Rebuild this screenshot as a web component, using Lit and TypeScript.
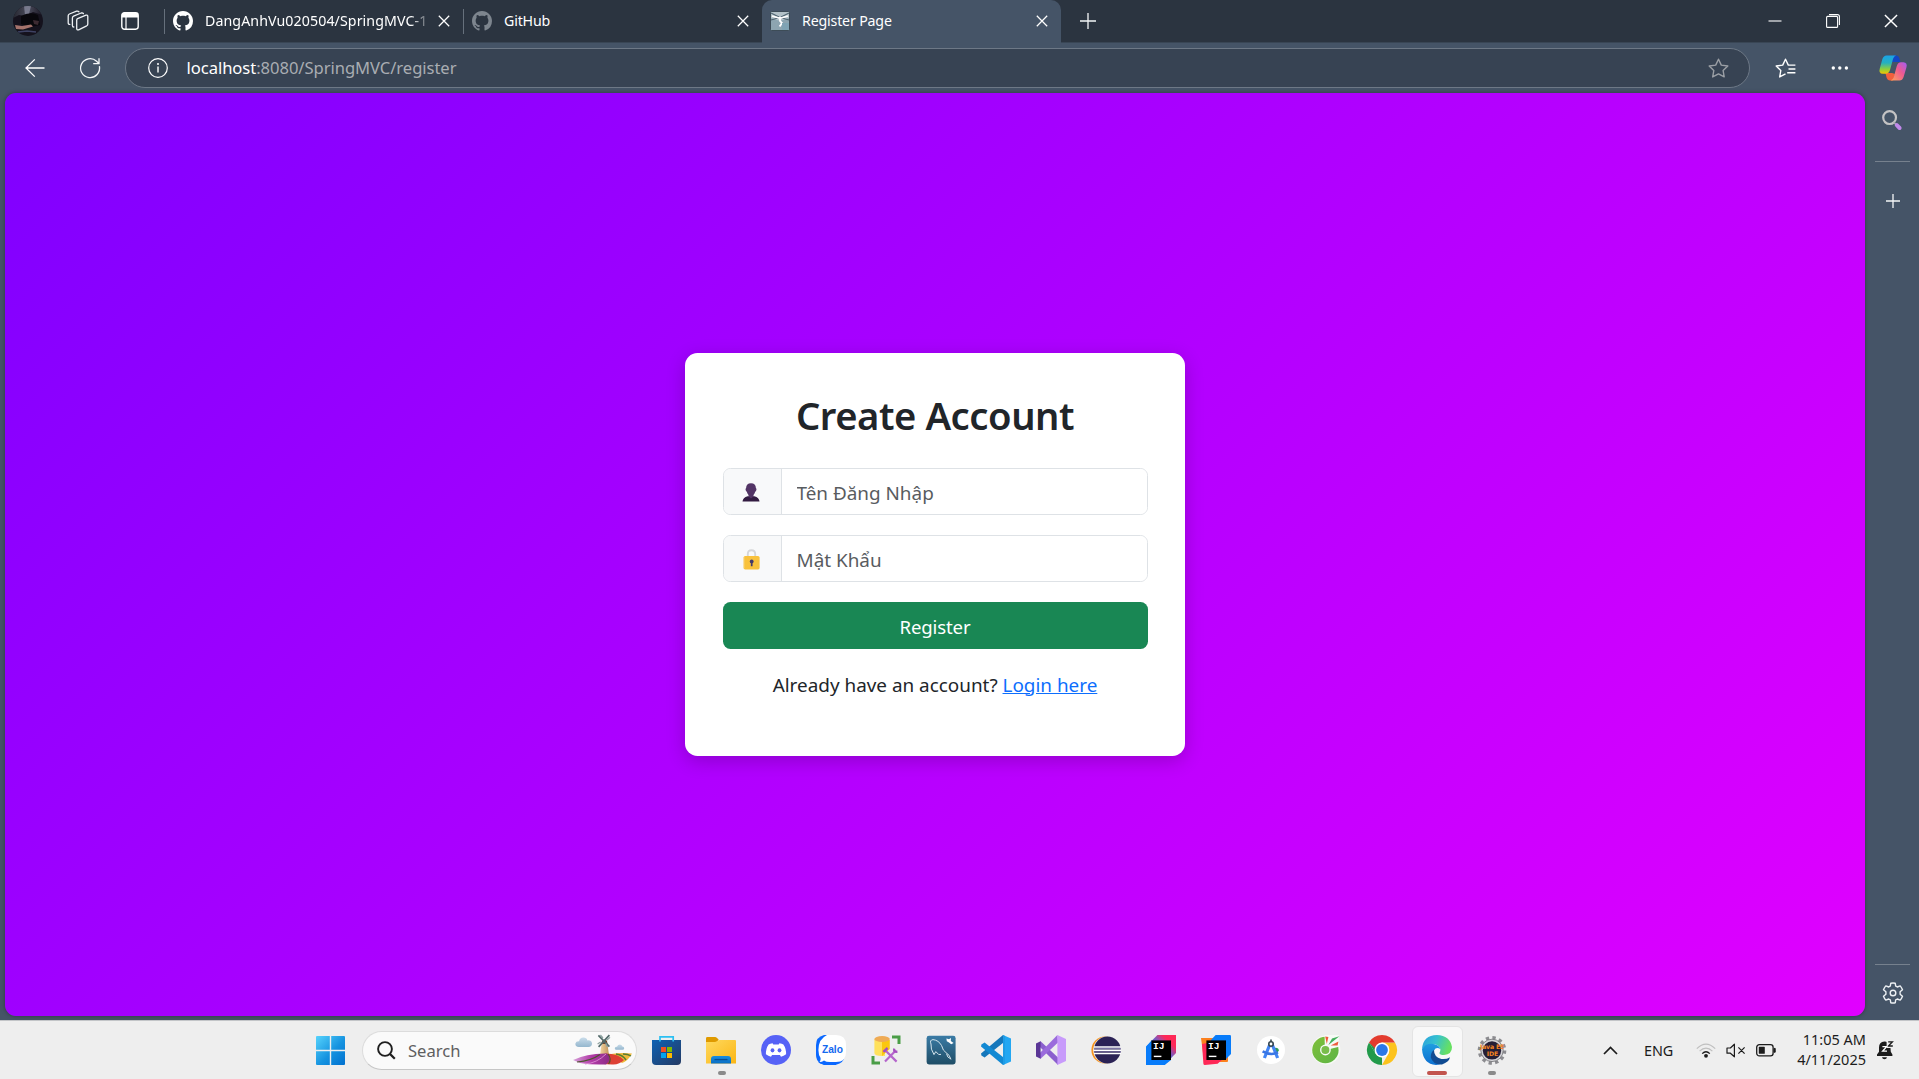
import { LitElement, html, svg, css } from "lit";
import { customElement, state } from "lit/decorators.js";

const icon = (w: number, h: number, body: unknown, vb = `0 0 ${w} ${h}`) =>
  html`<svg class="ic" width=${w} height=${h} viewBox=${vb} fill="none">${body}</svg>`;

const GITHUB =
  "M8 0C3.58 0 0 3.58 0 8c0 3.54 2.29 6.53 5.47 7.59.4.07.55-.17.55-.38 0-.19-.01-.82-.01-1.49-2.01.37-2.53-.49-2.69-.94-.09-.23-.48-.94-.82-1.13-.28-.15-.68-.52-.01-.53.63-.01 1.08.58 1.23.82.72 1.21 1.87.87 2.33.66.07-.52.28-.87.51-1.07-1.78-.2-3.64-.89-3.64-3.95 0-.87.31-1.59.82-2.15-.08-.2-.36-1.02.08-2.12 0 0 .67-.21 2.2.82.64-.18 1.32-.27 2-.27s1.36.09 2 .27c1.53-1.04 2.2-.82 2.2-.82.44 1.1.16 1.92.08 2.12.51.56.82 1.27.82 2.15 0 3.07-1.87 3.75-3.65 3.95.29.25.54.73.54 1.48 0 1.07-.01 1.93-.01 2.2 0 .21.15.46.55.38A8.01 8.01 0 0 0 16 8c0-4.42-3.58-8-8-8z";

const github = (color: string) => icon(20, 20, svg`<path fill=${color} d=${GITHUB}/>`, "0 0 16 16");

const cross = (s: number, color = "#fff") =>
  icon(s, s, svg`<path d="M.8 .8 L11.2 11.2 M11.2 .8 L.8 11.2" stroke=${color} stroke-width="1.25"/>`, "0 0 12 12");

const plus = (s: number) =>
  icon(s, s, svg`<path d=${`M${s / 2} 1 V${s - 1} M1 ${s / 2} H${s - 1}`} stroke="#f4f6f8" stroke-width="1.3"/>`);

const avatar = icon(
  30,
  30,
  svg`<defs>
      <clipPath id="av"><circle cx="15" cy="15" r="15"/></clipPath>
      <linearGradient id="avg" x1="0" x2="1"><stop stop-color="#25262f"/><stop offset=".5" stop-color="#4b4c5c"/><stop offset="1" stop-color="#181522"/></linearGradient>
    </defs>
    <g clip-path="url(#av)">
      <rect width="30" height="30" fill="#15121d"/>
      <path d="M0 0H30V9L20 6 12 10 6 9 0 12Z" fill="url(#avg)"/>
      <path d="M11 0H18L16 8 12 9Z" fill="#77798c"/>
      <path d="M8 10Q17 5 25 9L27 19 17 21 8 18Z" fill="#08070c"/>
      <path d="M2 19L9 20 18 18.5 20 20.5 10 23.5 3 23Z" fill="#a5736c"/>
      <path d="M20 14L26 15 25 19 21 18Z" fill="#3c2a31"/>
      <path d="M5 26L14 25 23 26" stroke="#3e4263" stroke-width="1.5"/>
    </g>`
);

const workspaces = icon(
  22,
  22,
  svg`<g stroke="#eef1f4" stroke-width="1.3" stroke-linejoin="round" stroke-linecap="round">
      <path d="M10.6 8.6 L19 5.2 Q20.8 4.7 20.8 6.4 V14 Q20.8 15.2 19.7 15.8 L11.6 19.8 Q9.7 20.4 9.7 18.6 V10.2 Q9.7 9 10.6 8.6Z"/>
      <path d="M6.8 17 Q5.4 17 5.4 15.4 V8 Q5.4 6.8 6.6 6.2 L14.2 3 Q15.8 2.6 16.4 3.6"/>
      <path d="M2.8 14.4 Q1.2 14.4 1.2 12.8 V5.8 Q1.2 4.6 2.4 4 L9.6 1.2 Q11.2 .8 12 1.8"/>
    </g>`
);

const tabActions = icon(
  18,
  18,
  svg`<rect x=".8" y=".8" width="16.4" height="16.4" rx="2.6" stroke="#fff" stroke-width="1.4"/>
    <path d="M.8 3.4 Q.8 .8 3.4 .8 H14.6 Q17.2 .8 17.2 3.4 V5.4 H.8Z" fill="#fff"/>
    <path d="M5 5V17" stroke="#fff" stroke-width="1.2"/>`
);

const favicon = icon(
  20,
  20,
  svg`<rect x=".5" y=".5" width="19" height="19" rx="1" fill="#8da5b0" stroke="#3d4c57"/>
    <path d="M1 1H19V7L10 10 1 7Z" fill="#b3c2c8"/>
    <path d="M1 2L9 6 M19 2L11 6 M1 9L8 7 M19 9L12 7" stroke="#4e6370" stroke-width="1.1"/>
    <path d="M2 5L9 7 M18 5L11 7 M10 6V10L12 12 9.6 15.6" stroke="#fff" stroke-width="1.8"/>
    <path d="M12 12H19V19H12Z" fill="#7fa3b3"/>`
);

const back = icon(20, 20, svg`<path d="M19.5 10H1 M9.8 1.4L1 10l8.8 8.6" stroke="#fff" stroke-width="1.3"/>`);
const reload = icon(
  22,
  22,
  svg`<path d="M20.4 9.2 A9.5 9.5 0 1 1 17.6 4.2 L19.8 6.4 M20 1.2V6.6H14.2" stroke="#f4f6f8" stroke-width="1.3"/>`
);
const info = icon(
  20,
  20,
  svg`<circle cx="10" cy="10" r="9.3" stroke="#fff" stroke-width="1.2"/><path d="M10 8.6V14.4" stroke="#fff" stroke-width="1.4"/><circle cx="10" cy="6" r="1" fill="#fff"/>`
);
const STAR = "M10.5 1.2L13.3 7.1 19.8 8 15.1 12.5 16.2 18.9 10.5 15.9 4.7 18.9 5.8 12.5 1.2 8 7.7 7.1Z";
const star = icon(21, 20, svg`<path d=${STAR} stroke="#9b9fa5" stroke-width="1.4" stroke-linejoin="round"/>`);
const favorites = icon(
  21,
  20,
  svg`<path d="M10.5 15.9L4.7 18.9 5.8 12.5 1.2 8 7.7 7.1 10.5 1.2 13.3 7.1H20.4 M13.5 11H20.4 M12.2 14.7H20.4" stroke="#fff" stroke-width="1.4" stroke-linejoin="round"/>`
);
const dots = icon(
  18,
  4,
  svg`<g fill="#fff"><circle cx="2.3" cy="2" r="1.7"/><circle cx="8.8" cy="2" r="1.7"/><circle cx="15.4" cy="2" r="1.7"/></g>`
);

const copilot = icon(
  28,
  26,
  svg`<defs>
      <linearGradient id="cp1" x1="0" y1="0" x2="0" y2="1"><stop stop-color="#1aa3e8"/><stop offset=".4" stop-color="#25b0c0"/><stop offset=".75" stop-color="#8fd03a"/><stop offset="1" stop-color="#f4c400"/></linearGradient>
      <linearGradient id="cp2" x1="1" y1="0" x2="0" y2="1"><stop stop-color="#a35cf5"/><stop offset=".45" stop-color="#ee5a90"/><stop offset="1" stop-color="#ffa45a"/></linearGradient>
    </defs>
    <path d="M14 .5H17Q19.6.5 20.4 3.4L21.4 7H18L12 7Z" fill="#1346c4"/>
    <path d="M14 25.5H11Q8.4 25.5 7.6 22.6L6.4 18H13L16 19Z" fill="#f2603c"/>
    <path d="M7.5.5H17Q14.8 1 14 4L11 15Q10 18.6 6.6 18.8H3.8Q-.6 18.4 .8 13.4L3.4 4Q4.6.5 7.5.5Z" fill="url(#cp1)"/>
    <path d="M20.5 25.5H11.6Q14 25 14.8 22L17.8 11Q18.8 7.4 22 7.2H24.4Q28.8 7.6 27.4 12.6L24.6 22Q23.4 25.5 20.5 25.5Z" fill="url(#cp2)"/>`
);

const sideSearch = icon(
  20,
  20,
  svg`<circle cx="7.6" cy="7.6" r="6.4" stroke="#c4c3c4" stroke-width="2.2"/>
    <path d="M11.8 12.2L14 14.6" stroke="#a9a7ad" stroke-width="1.6"/>
    <path d="M14.8 15.2L17.6 18" stroke="#c188ea" stroke-width="4" stroke-linecap="round"/>`
);

const gear = icon(
  22,
  22,
  svg`<path d="M8.8 1.2 Q11 .7 13.2 1.2 L13.7 4.2 Q14.4 4.5 15.2 5 L18.2 3.9 Q19.7 5.6 20.5 7.7 L18.1 9.7 V12.3 L20.5 14.3 Q19.7 16.4 18.2 18.1 L15.2 17 Q14.4 17.5 13.7 17.8 L13.2 20.8 Q11 21.3 8.8 20.8 L8.3 17.8 Q7.6 17.5 6.8 17 L3.8 18.1 Q2.3 16.4 1.5 14.3 L3.9 12.3 V9.7 L1.5 7.7 Q2.3 5.6 3.8 3.9 L6.8 5 Q7.6 4.5 8.3 4.2Z" stroke="#eef1f4" stroke-width="1.4" stroke-linejoin="round"/>
    <circle cx="11" cy="11" r="2.8" stroke="#eef1f4" stroke-width="1.4"/>`
);

const person = icon(
  18,
  19,
  svg`<path d="M.5 18.5Q.8 14.6 5.6 13.2H12.4Q17.2 14.6 17.5 18.5Z" fill="#321b41"/>
    <path d="M9 .3Q13.8.3 13.9 5Q15 5.8 14.2 7.6Q13.9 8.6 13.2 8.7Q12.7 10.8 11.5 12V13.6L9 15.4 6.5 13.6V12Q5.3 10.8 4.8 8.7Q4.1 8.6 3.8 7.6Q3 5.8 4.1 5Q4.2.3 9 .3Z" fill="#533566"/>`
);
const lock = icon(
  17,
  21,
  svg`<path d="M4.8 8V5.2Q4.8 1.2 8.5 1.2T12.2 5.2V8" stroke="#d5d6d8" stroke-width="1.9"/>
    <rect x=".6" y="7" width="16" height="13.4" rx="1.6" fill="#f9c23c"/>
    <path d="M.9 8V19.4" stroke="#f7dc98" stroke-width=".8"/>
    <circle cx="8.7" cy="12.4" r="1.9" fill="#433b6b"/><path d="M8.7 12.4V17.2" stroke="#433b6b" stroke-width="1.7"/>`
);

const windows = icon(
  29,
  29,
  svg`<defs><linearGradient id="win" x1="0" y1="0" x2="29" y2="29" gradientUnits="userSpaceOnUse"><stop stop-color="#57d3fc"/><stop offset=".55" stop-color="#1593e0"/><stop offset="1" stop-color="#0070cf"/></linearGradient></defs>
    <path d="M1 0H13.8V13.8H0V1Q0 0 1 0Z M15.2 0H28Q29 0 29 1V13.8H15.2Z M0 15.2H13.8V29H1Q0 29 0 28Z M15.2 15.2H29V28Q29 29 28 29H15.2Z" fill="url(#win)"/>`
);
const magnifier = icon(
  19,
  19,
  svg`<circle cx="8" cy="8" r="6.9" stroke="#1f1f1f" stroke-width="1.9"/><path d="M12.9 12.9L17.8 17.8" stroke="#1f1f1f" stroke-width="2.2"/>`
);

const windmill = icon(
  60,
  32,
  svg`<defs>
      <linearGradient id="cl" x1="0" y1="0" x2="0" y2="1"><stop stop-color="#c9dcea"/><stop offset="1" stop-color="#95b7ce"/></linearGradient>
      <linearGradient id="mill" x1="0" x2="1"><stop stop-color="#f3d6a2"/><stop offset="1" stop-color="#c3935a"/></linearGradient>
      <linearGradient id="f1" x1="0" x2="1"><stop stop-color="#d7a3da"/><stop offset=".5" stop-color="#b23ba8"/><stop offset="1" stop-color="#8c2b86"/></linearGradient>
    </defs>
    <path d="M6 13Q2 13 2.4 9.6 3 7 6 7.2 7 3.4 10.6 3.6 13.6 3.6 14.4 6.4 18.6 6 19 9.6 19 13 15.4 13Z" fill="url(#cl)"/>
    <path d="M43 15.8Q41.6 15.6 41.8 14 42.4 12.6 44 12.8 44.8 10.4 47 10.4 49 10.6 49.4 12.6 51.4 12.8 51.2 14.4 51 15.8 49.6 15.8Z" fill="url(#cl)"/>
    <path d="M29 7Q31.5 4 34 7L36 21H27Z" fill="url(#mill)"/>
    <path d="M29 7Q31.5 4.6 34 7L34.4 10H28.6Z" fill="#75452f"/>
    <path d="M38 20Q48 18.5 59 19.5 55 27 49 29Z" fill="#f0b93a"/>
    <path d="M43 20Q50 21 53 26 M50 20Q55 20 58 22" stroke="#5a7d2f" stroke-width="1.5"/>
    <path d="M32 19.4Q46 19.6 51 26 46 31 39 30.4L30 30Z" fill="#dd4135"/>
    <path d="M0 26Q14 19 34 19.4 40 25 33 30.4 18 31 7 29Z" fill="url(#f1)"/>
    <path d="M4 28Q18 27 27 20.6 M35 20Q39 25 35.6 30" stroke="#4e5530" stroke-width="1.2"/>
    <path d="M12 30Q24 29 33 20" stroke="#d884d0" stroke-width="1"/>
    <path d="M25.4 1.4L36.4 12.6 M36.4 1.2L25.6 12.8" stroke="#536a6a" stroke-width="1.7"/>
    <path d="M27.4 1L30 4 M37 3.4L34 6 M24.6 10L27.6 8 M34.4 13L32.8 9.6" stroke="#8fa3a0" stroke-width="1.2"/>`
);

const store = svg`<defs><linearGradient id="st" x1="0" y1="0" x2="1" y2="1"><stop stop-color="#0f62b4"/><stop offset="1" stop-color="#243a63"/></linearGradient></defs>
  <path d="M1 5H30V26Q30 30 26 30H5Q1 30 1 26Z" fill="url(#st)"/>
  <path d="M9 6.5V1.8H22.2V6.5" stroke="#2cc0f2" stroke-width="1.7"/>
  <path d="M10 12H15V17H10Z" fill="#f25022"/><path d="M16 12H21V17H16Z" fill="#7fba00"/>
  <path d="M10 18H15V23H10Z" fill="#00a4ef"/><path d="M16 18H21V23H16Z" fill="#ffb900"/>`;

const explorer = svg`<defs><linearGradient id="ex" x1="0" y1="0" x2="1" y2="1"><stop stop-color="#ffd95e"/><stop offset="1" stop-color="#fbb615"/></linearGradient><linearGradient id="ex2" x1="0" y1="0" x2="0" y2="1"><stop stop-color="#1a8de0"/><stop offset="1" stop-color="#0a6fc4"/></linearGradient></defs>
  <path d="M0 3.4Q0 2 1.4 2H9.4Q10.6 2 12.6 4.6L11 8H0Z" fill="#df9a00"/>
  <path d="M0 7H8.6Q10 7 11.4 5.8 12.4 5 14 5H29Q30 5 30 6V28.4H0Z" fill="url(#ex)"/>
  <path d="M5 28.4V24Q5 21 8 21H22Q25 21 25 24V28.4Z" fill="url(#ex2)"/>
  <path d="M8.5 24.6H21.5" stroke="#0a4f94" stroke-width="1.3"/>`;

const discord = svg`<circle cx="15" cy="15" r="15" fill="#5662f6"/>
  <path d="M11.6 8.2Q9 8.6 7.6 9.4 4.8 13.4 4.9 19.3 7.3 21.2 10 21.8L11.1 19.9H18.9L20 21.8Q22.7 21.2 25.1 19.3 25.2 13.4 22.4 9.4 21 8.6 18.4 8.2L17.7 9.6Q15 9.2 12.3 9.6Z" fill="#fff"/>
  <ellipse cx="11.5" cy="15.3" rx="1.9" ry="2.1" fill="#5662f6"/><ellipse cx="18.5" cy="15.3" rx="1.9" ry="2.1" fill="#5662f6"/>`;

const zalo = svg`<path d="M8 0H20V30H14Q8 30 4 28.4 0 25 0 20V10Q0 2 8 0Z" fill="#0a68ff"/>
  <path d="M2 27L10 25 28 24Q25 30 16 30H8Z" fill="#0a68ff"/>
  <path d="M11 0H20Q30 0 30 10V17Q30 27 20 27H14Q10 27 8 25.4 6 27 3.6 27 5 25 4.6 23 2.4 20 2.4 15 2.4 4 11 0Z" fill="#fff"/>
  <text x="16.4" y="17.6" text-anchor="middle" class="zalo">Zalo</text>`;

const ssms = svg`<path d="M21 2H28V9 M9 28H2V21" stroke="#4a9d47" stroke-width="3"/>
  <path d="M3.4 4V18Q3.4 21 11 21H14V4Z" fill="#ffe15c"/><path d="M11 5H18.8V14L11 21Z" fill="#fbc70f"/>
  <ellipse cx="11.1" cy="4" rx="7.7" ry="3" fill="#efab55"/>
  <path d="M14 15L25.6 26.6 M24.8 15.4L14 26.6" stroke="#b565cc" stroke-width="2.2"/>
  <path d="M12.4 16.8L16.6 13 M23.4 13.6Q22 17 26.4 16.8" stroke="#a54fc0" stroke-width="2.4"/>`;

const mysql = svg`<defs><linearGradient id="my" x1="0" y1="0" x2="0" y2="1"><stop stop-color="#3a7ba5"/><stop offset="1" stop-color="#1f4d66"/></linearGradient></defs>
  <rect x=".6" y=".8" width="29" height="28.6" rx="2.4" fill="url(#my)"/>
  <path d="M8 19.6Q4.4 14 5 9 3.4 5 7 4.6 12.6 5.2 15.6 10.6 17 16 20 17.6 23.6 19.6 25 24.4 M8 19.6L9.8 16.6Q13 21 15 19.4 M20.6 18.8Q21 22.6 24.6 23.8" stroke="#d5e4ec" stroke-width="1"/>
  <path d="M20.4 3.4L23 4.2 25 3 24.8 6 27.6 8 25.2 9.2 23 7.4 20.8 6.2Z" fill="#fff"/>`;

const vscode = svg`<path d="M22 0L30 3.4V26.6L22 30Z" fill="#23a7f2"/>
  <path d="M22 0L22.6 7.6 3.6 22.4 .4 20.4 0 18.6Z" fill="#1577bb"/>
  <path d="M22 30L22.6 22.4 3.6 7.6 .4 9.6 0 11.4Z" fill="#1289d3"/>
  <path d="M22 0L24 1V29L22 30Z" fill="#1f9ce6"/>`;

const vs = svg`<path d="M4.6 6.2L22 22.4V30L1.4 9.4Z" fill="#8b5fce"/>
  <path d="M21.4 0L22 7.6 4.6 23.8 1.4 20.6Z" fill="#9a6bdc"/>
  <path d="M0 8.4L4.6 6.2V23.8L0 21.6Z" fill="#5a3595"/>
  <path d="M21.4 0L30 4V26L21.4 30Z" fill="#c89bfb"/>`;

const eclipse = svg`<circle cx="14" cy="15" r="13.6" fill="#f7941e"/><circle cx="15.8" cy="15" r="13.6" fill="#ededed"/><circle cx="16.4" cy="15" r="13.4" fill="#2b2255"/>
  <path d="M3 11.9H30 M2.6 15.2H30.2 M3 18.4H30" stroke="#fff" stroke-width="1.5"/>
  <path d="M3 13.5H30 M3 16.8H30" stroke="#8f86b8" stroke-width=".8"/>`;

const ijBadge = svg`<path d="M5.4 5.4H25V25H5.4Z" fill="#000"/>
  <text x="7" y="14.4" class="ij">IJ</text>
  <path d="M7.8 21.4H15.4" stroke="#fff" stroke-width="1.4"/>`;

const ijUltimate = svg`<defs><linearGradient id="ij" x1="0" y1="1" x2="1" y2="0"><stop offset=".35" stop-color="#087cfa"/><stop offset=".62" stop-color="#8a55b5"/><stop offset=".78" stop-color="#fe2857"/></linearGradient></defs>
  <path d="M11.4 0H30V18L18.6 30H0V11.4Z" fill="url(#ij)"/><path d="M0 12L6 5V25H25L18.6 30H0Z" fill="#087cfa"/>${ijBadge}`;

const ijCommunity = svg`<path d="M0 3H12L14 27 2 18Z" fill="#fc801d"/><path d="M16 22H27V26Q27 27 26 27H17Z" fill="#fc801d"/>
  <path d="M14.6 0H28.8Q30 0 30 1.2V19L24 25H9L10 5Z" fill="#087cfa"/>
  <path d="M1 9L6 8V24H22L16.6 28.8 3.8 30Q2.6 30 2.4 28.8Z" fill="#fe2857"/>${ijBadge}`;

const androidStudio = svg`<circle cx="15" cy="15" r="14" fill="#fff"/>
  <path d="M18 13Q22.6 12 22.8 15.6 22 18 19.6 17.4Z" fill="#2f9b5c"/>
  <path d="M14.4 8L8.4 23 M15.6 8L21.6 23" stroke="#4285f4" stroke-width="3.2"/>
  <path d="M6.6 16.4Q15 21 22 17.4" stroke="#3a76e4" stroke-width="2.6"/>
  <circle cx="15" cy="9" r="2.2" fill="#fff" stroke="#37474f" stroke-width="1.6"/><path d="M15 4.6V7" stroke="#37474f" stroke-width="1.6"/>`;

const cocCoc = svg`<defs><linearGradient id="cc" x1="0" y1="0" x2="1" y2="1"><stop stop-color="#7fbf3a"/><stop offset="1" stop-color="#5db545"/></linearGradient></defs>
  <circle cx="15" cy="15" r="14.4" fill="#f6faf4"/>
  <circle cx="14.4" cy="15" r="13.2" fill="url(#cc)"/>
  <path d="M13.6 0H28V11.8L17 14.6 13.8 12Z" fill="#f7faf6"/>
  <circle cx="14.4" cy="15" r="5.4" fill="#f7faf6"/>
  <circle cx="14.4" cy="15" r="4" fill="#79bd4b"/>
  <path d="M14.2 1.4L17.4 2 15.8 9Z" fill="#ef5b3c"/><path d="M21 3.4L28.4 1.2 17.4 10Z" fill="#43b05c"/><path d="M19.6 10.6L27.4 6.6 26.6 10.6Z" fill="#ef5b3c"/>`;

const chrome = svg`<path d="M2 7.5L8.8 19 15 22.5 15 30A15 15 0 0 1 2 7.5Z" fill="#229a4a"/>
  <path d="M28 7.5A15 15 0 0 1 15 30L21.4 18.8 21.5 11 15 7.5Z" fill="#fcc31d"/><path d="M2 7.5A15 15 0 0 1 28 7.5H15L9 11.6 8.6 15Z" fill="#e33b2e"/><path d="M2 7.5L8.6 18.8 7.6 13Z" fill="#229a4a"/>
  <circle cx="15" cy="15" r="7.4" fill="#fff"/><circle cx="15" cy="15" r="5.9" fill="#2b78e8"/>`;

const edge = svg`<defs>
    <linearGradient id="e1" x1="0" y1="0" x2="1" y2=".3"><stop stop-color="#2a9fe0"/><stop offset=".5" stop-color="#36c1cf"/><stop offset="1" stop-color="#66e062"/></linearGradient>
    <linearGradient id="e2" x1="0" y1="0" x2="0" y2="1"><stop stop-color="#1f9de0"/><stop offset="1" stop-color="#0d6fd0"/></linearGradient>
  </defs>
  <path d="M0 14Q1.2 0 15 0 28 .6 30 12 30 19.6 22 20 17.6 20 17.4 18 18.6 16.8 18.4 14 16.6 9 10 9 3 9.6 0 14Z" fill="url(#e1)"/>
  <path d="M0 14Q2.6 8.8 9.4 8.8 16.6 9 18.4 14 14 11.6 12 15.4 10 24 20 28 17.6 30 14 30 1 29 0 14Z" fill="url(#e2)"/>
  <path d="M12 15Q11.8 22 19.4 24 24.6 24.6 28 22.2 27 27 20 29.4 11 30 8.8 22.6 8.6 17 12 15Z" fill="#114c93"/>`;

const javaEe = svg`<circle cx="15" cy="15.4" r="12.6" stroke="#8c8c90" stroke-width="3.4" stroke-dasharray="3.3 3.3"/>
  <circle cx="15" cy="15.4" r="11.2" fill="#d3d3d6" stroke="#707074" stroke-width=".8"/><circle cx="15" cy="15.4" r="9.2" fill="#251e35"/>
  <text x="15" y="14.4" text-anchor="middle" class="jee">Java EE</text><text x="15.4" y="20.6" text-anchor="middle" class="jee">IDE</text>`;

const apps: { name: string; art: unknown; mark?: string }[] = [
  { name: "Microsoft Store", art: store },
  { name: "File Explorer", art: explorer, mark: "run" },
  { name: "Discord", art: discord },
  { name: "Zalo", art: zalo },
  { name: "SQL Server", art: ssms },
  { name: "MySQL Workbench", art: mysql },
  { name: "VS Code", art: vscode },
  { name: "Visual Studio", art: vs },
  { name: "Eclipse", art: eclipse },
  { name: "IntelliJ IDEA", art: ijUltimate },
  { name: "IntelliJ IDEA Community", art: ijCommunity },
  { name: "Android Studio", art: androidStudio },
  { name: "Coc Coc", art: cocCoc },
  { name: "Chrome", art: chrome },
  { name: "Edge", art: edge, mark: "active" },
  { name: "Java EE IDE", art: javaEe, mark: "run" },
];

const chevron = icon(15, 9, svg`<path d="M1 8L7.5 1.5 14 8" stroke="#1c1c1c" stroke-width="1.7"/>`);
const wifi = icon(
  20,
  15,
  svg`<path d="M.8 5.6Q10-3.4 19.2 5.6 M3.6 8.2Q10 1.8 16.4 8.2" stroke="#bfbfbf" stroke-width="1.2"/>
    <path d="M6.2 10.6Q10 6.8 13.8 10.6" stroke="#1c1c1c" stroke-width="1.3"/><circle cx="10" cy="12.8" r="1.9" fill="#1c1c1c"/>`
);
const mute = icon(
  20,
  15,
  svg`<path d="M1 5H4.4L8.4 1.2V13.8L4.4 10.2H1Z M12.4 4.4L18.6 10.6 M18.6 4.4L12.4 10.6" stroke="#1c1c1c" stroke-width="1.2" stroke-linejoin="round"/>`
);
const battery = icon(
  20,
  13,
  svg`<rect x=".7" y=".7" width="16.4" height="11.2" rx="2.6" stroke="#1c1c1c" stroke-width="1.3"/><rect x="2.8" y="2.8" width="6" height="7" rx=".6" fill="#1c1c1c"/><path d="M18 4.4H19.2V8.2H18Z" fill="#1c1c1c" stroke="#1c1c1c"/>`
);
const bell = icon(
  18,
  20,
  svg`<path d="M1 14.6L3 11.8V7.6Q3 1.6 8.4 1.4 12 1.2 14.4 7L14.8 11.8 16.4 14.6V16H1Z" fill="#1c1c1c"/><path d="M6 17.2H11Q10.6 19.2 8.5 19.2T6 17.2Z" fill="#1c1c1c"/>
    <path d="M10.6 .6H18V8H10.6Z" fill="#eee"/><path d="M12.2 1.8H16.4L12.4 6H16.8" stroke="#1c1c1c" stroke-width="1.3"/><path d="M6.4 6.6H10.6L6.6 11.2H11" stroke="#fff" stroke-width="1.3"/>`
);

@customElement("app-root")
export class AppRoot extends LitElement {
  @state() private user = "";
  @state() private pass = "";

  static styles = css`
    :host {
      display: flex;
      flex-direction: column;
      width: 1919px;
      height: 1079px;
      overflow: hidden;
      background: #455467;
      color: #fff;
      font-family: "Noto Sans", "Open Sans", sans-serif;
    }
    * { box-sizing: border-box; }
    .ic { display: block; flex: none; overflow: visible; }
    .cell { display: flex; align-items: center; justify-content: center; flex: none; }
    .grow { flex: 1; }

    .tabs { display: flex; height: 43px; flex: none; background: #2b3440; border-bottom: 1px solid #394655; }
    .w56 { width: 56px; }
    .w44 { width: 44px; }
    .w60 { width: 60px; }
    .w58 { width: 58px; }
    .w54 { width: 54px; }
    .w57 { width: 57px; }
    .strip { display: flex; margin-left: 4px; }
    .tab { display: flex; align-items: center; width: 299px; height: 42px; padding: 0 13px 0 0; font-size: 14.2px; letter-spacing: -0.17px; }
    .tab::before { content: ""; width: 1px; height: 25px; background: #66707c; margin-right: 8px; }
    .tab .label { margin-left: 12px; flex: 1; white-space: nowrap; overflow: hidden; line-height: 22px; }
    .tab .fade { letter-spacing: 0.09px; -webkit-mask-image: linear-gradient(90deg, #000 206px, transparent 227px); mask-image: linear-gradient(90deg, #000 206px, transparent 227px); }
    .tab .label + .ic { margin-left: 10px; }
    .tab.on { height: 43px; padding-bottom: 2px; background: #455467; border-radius: 10px 10px 0 0; }
    .tab.on::before { background: none; margin-right: 7px; }

    .bar { display: flex; align-items: center; height: 50px; flex: none; }
    .addr { display: flex; align-items: center; width: 1625px; height: 40px; border: 1.3px solid #6d7886; border-radius: 20px; background: #374353; padding: 0 20px 0 21.5px; }
    .url { flex: 1; margin-left: 19px; padding-bottom: 2px; font-size: 16.6px; letter-spacing: -0.05px; color: #a9adb2; white-space: nowrap; }
    .url b { font-weight: 400; color: #fff; }
    .back { width: 70px; }
    .reload { width: 40px; }
    .gap { width: 15px; flex: none; }
    .fav { width: 70px; }
    .more { width: 40px; margin-right: 16px; }
    .cop { width: 34px; }

    .body { display: flex; flex: 1; min-height: 0; padding: 0 0 4px 5px; }
    .page {
      width: 1860px;
      display: flex;
      align-items: center;
      justify-content: center;
      border-radius: 11px;
      background: linear-gradient(135deg, #7f00ff, #e100ff);
      box-shadow: 0 0 4px rgba(0, 0, 0, 0.35);
    }
    .side { width: 54px; display: flex; flex-direction: column; align-items: center; padding: 17px 0 12px 1px; }
    .side .find { margin-right: 2px; }
    .rule { width: 35px; height: 1px; background: #76818e; }
    .side .add { margin-top: 31px; }
    .side .r1 { margin-top: 31px; }
    .side .r2 { margin-bottom: 17px; }

    .card {
      width: 500px;
      padding: 37px 37.5px 56.5px;
      background: #fff;
      border-radius: 12.5px;
      box-shadow: 0 5px 19px rgba(0, 0, 0, 0.2);
      color: #212529;
    }
    h2 { margin: 0 0 27.3px; font-size: 38.2px; font-weight: 600; letter-spacing: -0.45px; line-height: 51px; text-align: center; white-space: nowrap; }
    .group { display: flex; height: 47px; margin-bottom: 20px; border: 1px solid #dee2e6; border-radius: 7.5px; overflow: hidden; }
    .pre { width: 58px; background: #f8f9fa; border-right: 1px solid #dee2e6; display: flex; align-items: center; justify-content: center; padding: 2px 1.5px 0 0; }
    .group input { flex: 1; border: 0; outline: 0; background: #fff; padding: 3px 15px 0; font: 18.9px "Noto Sans", sans-serif; color: #212529; }
    .group input::placeholder { color: #595c5f; opacity: 1; }
    .btn { display: block; width: 100%; height: 47px; border: 0; border-radius: 7.5px; background: #198754; color: #fff; font: 18.6px "Noto Sans", sans-serif; letter-spacing: -0.15px; padding: 2px 0 0; }
    .alt { margin: 20.7px 0 0; font-size: 18.9px; line-height: 30px; text-align: center; white-space: nowrap; }
    .alt a { color: #0d6efd; text-decoration: underline; }

    .task { display: flex; align-items: center; height: 59px; flex: none; background: #eee; border-top: 1px solid #c3c5c8; color: #1c1c1c; padding-left: 316px; }
    .search { display: flex; align-items: center; width: 275px; height: 39px; margin: 0 1.6px 0 17px; border: 1px solid #dcdcdc; border-bottom-color: #c6c6c6; border-radius: 20px; background: #fafafa; padding: 0 3px 0 14px; }
    .search span { flex: 1; margin-left: 12px; font-size: 16.6px; color: #5f5f5f; }
    .app { position: relative; width: 55.04px; height: 59px; display: flex; align-items: center; justify-content: center; flex: none; }
    .app.active::before { content: ""; position: absolute; left: 3px; top: 5px; width: 49px; height: 49px; border-radius: 6px; background: #f8f8f8; border: 1px solid #e4e4e4; }
    .app .ic { position: relative; }
    .app.run::after, .app.active::after { content: ""; position: absolute; bottom: 5px; left: 24px; width: 8px; height: 4px; border-radius: 2px; background: #8a8a8a; }
    .app.active::after { left: 18px; width: 20px; background: #c2554e; }
    .zalo { font: 700 10.2px "Liberation Sans", sans-serif; fill: #1469ef; }
    .ij { font: 700 9.6px "Liberation Mono", monospace; fill: #fff; }
    .jee { font: 700 6.2px "DejaVu Sans", sans-serif; letter-spacing: -0.2px; fill: #f58220; }
    .tray { display: flex; align-items: center; margin-left: auto; padding-right: 25px; }
    .lang { margin-left: 26px; width: 30px; font-size: 14.4px; letter-spacing: -0.1px; }
    .tray .wifi { margin-left: 22px; }
    .tray .mute { margin-left: 9.5px; }
    .tray .bat { margin-left: 10px; }
    .clock { width: 90.5px; padding-bottom: 2px; text-align: right; font-size: 14.5px; line-height: 20px; margin-right: 10px; }
  `;

  private tab(label: string, art: unknown, cls = "", fade = "") {
    return html`<div class="tab ${cls}">${art}<span class="label ${fade}">${label}</span>${cross(12)}</div>`;
  }

  private field(art: unknown, placeholder: string, type: string, value: string, set: (v: string) => void) {
    return html`<label class="group">
      <span class="pre">${art}</span>
      <input type=${type} placeholder=${placeholder} .value=${value} @input=${(e: Event) => set((e.target as HTMLInputElement).value)} />
    </label>`;
  }

  render() {
    return html`
      <div class="tabs">
        <div class="cell w56">${avatar}</div>
        <div class="cell w44">${workspaces}</div>
        <div class="cell w60">${tabActions}</div>
        <div class="strip">
          ${this.tab("DangAnhVu020504/SpringMVC-1", github("#fff"), "", "fade")}
          ${this.tab("GitHub", github("#7d858e"))}
          ${this.tab("Register Page", favicon, "on")}
        </div>
        <div class="cell w54">${plus(18)}</div>
        <div class="grow"></div>
        <div class="cell w58">${icon(14, 2, svg`<path d="M.5 1H13.5" stroke="#fff" stroke-width="1.1"/>`)}</div>
        <div class="cell w58">
          ${icon(14, 14, svg`<rect x=".6" y="2.4" width="11" height="11" rx="1" stroke="#fff" stroke-width="1.1"/><path d="M3 .6H11.4Q13.4 .6 13.4 2.6V11" stroke="#fff" stroke-width="1.1"/>`)}
        </div>
        <div class="cell w57">${cross(14)}</div>
      </div>
      <div class="bar">
        <div class="cell back">${back}</div>
        <div class="cell reload">${reload}</div>
        <div class="gap"></div>
        <div class="addr">
          ${info}
          <div class="url"><b>localhost</b>:8080/SpringMVC/register</div>
          ${star}
        </div>
        <div class="cell fav">${favorites}</div>
        <div class="cell more">${dots}</div>
        <div class="cell cop">${copilot}</div>
      </div>
      <div class="body">
        <div class="page">
          <form class="card" @submit=${(e: Event) => e.preventDefault()}>
            <h2>Create Account</h2>
            ${this.field(person, "Tên Đăng Nhập", "text", this.user, (v) => (this.user = v))}
            ${this.field(lock, "Mật Khẩu", "password", this.pass, (v) => (this.pass = v))}
            <button class="btn">Register</button>
            <p class="alt">Already have an account? <a>Login here</a></p>
          </form>
        </div>
        <div class="side">
          <div class="find">${sideSearch}</div>
          <div class="rule r1"></div>
          <div class="add">${plus(16)}</div>
          <div class="grow"></div>
          <div class="rule r2"></div>
          ${gear}
        </div>
      </div>
      <div class="task">
        ${windows}
        <div class="search">${magnifier}<span>Search</span>${windmill}</div>
        ${apps.map((a) => html`<div class="app ${a.mark ?? ""}">${icon(30, 30, a.art)}</div>`)}
        <div class="tray">
          ${chevron}
          <span class="lang">ENG</span>
          <span class="wifi">${wifi}</span><span class="mute">${mute}</span><span class="bat">${battery}</span>
          <div class="clock">11:05 AM<br />4/11/2025</div>
          ${bell}
        </div>
      </div>
    `;
  }
}
